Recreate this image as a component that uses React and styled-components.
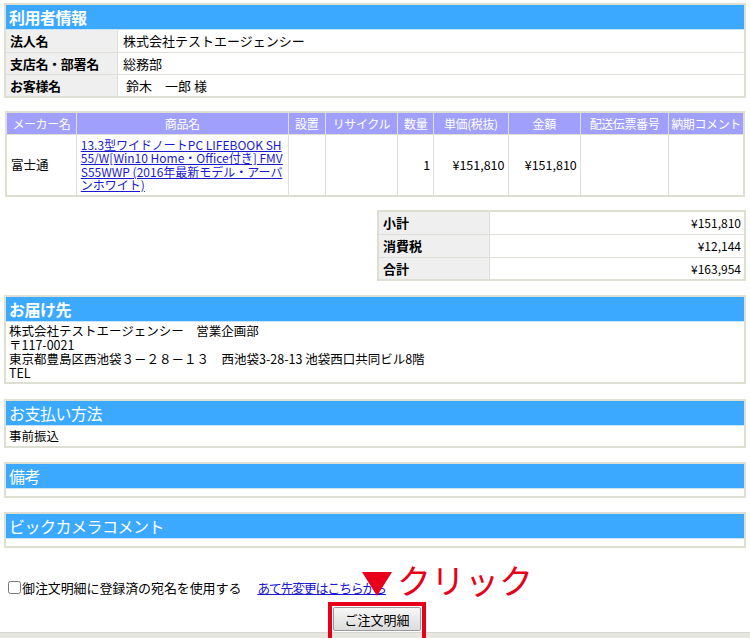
import React from 'react';
import styled, { createGlobalStyle } from 'styled-components';

const Global = createGlobalStyle`
  html, body { margin: 0; padding: 0; background: #fff; }
  body { font-family: "Noto Sans CJK JP", "Noto Sans", sans-serif; color: #000; font-size: 12px; }
  * { box-sizing: border-box; }
`;

const Page = styled.div`
  position: relative;
  width: 750px;
  height: 638px;
  overflow: hidden;
  padding: 3px 4px 0 4px;
  display: flex;
  flex-direction: column;
`;

const Section = styled.section`
  border: 2px solid #dcdfd2;
  margin-top: ${p => p.$mt || 0}px;
`;

const Header = styled.h2`
  margin: 0;
  height: 25px;
  background: #3aa9ff;
  border-bottom: 1px solid #c7e3f7;
  color: #fff;
  font-size: 16px;
  font-weight: ${p => (p.$bold ? 700 : 400)};
  line-height: 25px;
  padding-left: 3px;
  letter-spacing: -0.5px;
`;

const InfoRow = styled.div`
  display: grid;
  grid-template-columns: 112px 1fr;
  height: 22px;
  border-top: ${p => (p.$first ? 'none' : '1px solid #dedfd8')};
`;

const Label = styled.div`
  background: #efefef;
  border-right: 1px solid #dedfd8;
  font-weight: 700;
  font-size: 13px;
  line-height: 21px;
  padding-left: 4px;
  letter-spacing: -0.3px;
`;

const Value = styled.div`
  font-size: 13px;
  line-height: 21px;
  padding-left: ${p => p.$pad || 5}px;
  background: #fff;
`;

const Table = styled.table`
  border-collapse: collapse;
  table-layout: fixed;
  border: 2px solid #dcdfd2;
  width: ${p => p.$w}px;
  margin-top: ${p => p.$mt}px;
  margin-left: ${p => (p.$right ? 'auto' : '1px')};
`;

const Th = styled.th`
  background: #a0a0fc;
  color: #fff;
  font-weight: 400;
  font-size: 12px;
  height: 22px;
  padding: 0 1px;
  border: 1px solid #dcdfd2;
  white-space: nowrap;
  overflow: hidden;
  text-align: center;
  letter-spacing: -0.4px;
`;

const Td = styled.td`
  border: 1px solid #dedfd8;
  font-size: 12.5px;
  padding: 2px 3px 2px 4px;
  text-align: ${p => p.$align || 'left'};
  vertical-align: middle;
  height: 62px;
`;

const ProductLink = styled.a`
  color: #1a1ad0;
  text-decoration: underline;
  font-size: 12px;
  line-height: 13.5px;
  display: block;
  letter-spacing: 0px;
  word-break: break-all;
`;

const SumLabel = styled.td`
  background: #efefef;
  border: 1px solid #dedfd8;
  font-weight: 700;
  font-size: 13px;
  height: 23px;
  padding: 0 4px;
  width: 111px;
`;

const SumValue = styled.td`
  border: 1px solid #dedfd8;
  font-size: 12px;
  text-align: right;
  padding: 0 3px;
`;

const Body = styled.div`
  padding: ${p => p.$py}px 3px;
  font-size: 12.5px;
  line-height: 14px;
`;

const EmptyBody = styled.div`
  height: 7px;
`;

const CheckRow = styled.div`
  margin-top: 31px;
  display: flex;
  align-items: center;
  font-size: 13px;
  letter-spacing: -0.1px;
  height: 16px;
  padding-left: 4px;
`;

const Check = styled.input`
  margin: 0 1px 0 0;
  width: 13px;
  height: 13px;
`;

const ChangeLink = styled.a`
  color: #1a1ad0;
  text-decoration: underline;
  margin-left: 16px;
  letter-spacing: -1.3px;
`;

const ButtonArea = styled.div`
  display: flex;
  justify-content: center;
  padding-left: 4px;
  margin-top: 7px;
`;

const Highlight = styled.div`
  border: 4px solid #e8001a;
  padding: 1px;
  height: 45px;
`;

const OrderButton = styled.button`
  width: 88px;
  height: 24px;
  font-family: inherit;
  font-size: 13px;
  background: linear-gradient(#f7f7f7, #dcdcdc);
  border: 1px solid #9a9a9a;
  border-radius: 2px;
  padding: 0;
  color: #000;
`;

const Footer = styled.div`
  position: absolute;
  left: 0;
  right: 0;
  top: 632px;
  height: 6px;
  background: #e6e6e0;
  border-top: 1px solid #d8d8d0;
  z-index: 0;
`;

const Triangle = styled.div`
  position: absolute;
  left: 362px;
  top: 572px;
  width: 0;
  height: 0;
  border-left: 15px solid transparent;
  border-right: 15px solid transparent;
  border-top: 24px solid #e8001a;
  z-index: 2;
`;

const ClickText = styled.div`
  position: absolute;
  left: 397px;
  top: 558px;
  color: #e8001a;
  font-size: 34px;
  line-height: 44px;
  z-index: 2;
`;

const AboveFooter = styled.div`
  position: relative;
  z-index: 1;
`;

const cols = [70, 211, 37, 72, 36, 74, 72, 88, 75];
const heads = ['メーカー名', '商品名', '設置', 'リサイクル', '数量', '単価(税抜)', '金額', '配送伝票番号', '納期コメント'];

export default function App() {
  return (
    <>
      <Global />
      <Page>
        <Section>
          <Header $bold>利用者情報</Header>
          <InfoRow $first>
            <Label>法人名</Label>
            <Value>株式会社テストエージェンシー</Value>
          </InfoRow>
          <InfoRow>
            <Label>支店名・部署名</Label>
            <Value>総務部</Value>
          </InfoRow>
          <InfoRow>
            <Label>お客様名</Label>
            <Value $pad={8}>鈴木　一郎 様</Value>
          </InfoRow>
        </Section>

        <Table $w={740} $mt={13}>
          <colgroup>
            {cols.map((w, i) => <col key={i} style={{ width: w }} />)}
          </colgroup>
          <thead>
            <tr>{heads.map(h => <Th key={h}>{h}</Th>)}</tr>
          </thead>
          <tbody>
            <tr>
              <Td>富士通</Td>
              <Td>
                <ProductLink href="#">13.3型ワイドノートPC LIFEBOOK SH55/W[Win10 Home・Office付き] FMVS55WWP (2016年最新モデル・アーバンホワイト)</ProductLink>
              </Td>
              <Td />
              <Td />
              <Td $align="right">1</Td>
              <Td $align="right">¥151,810</Td>
              <Td $align="right">¥151,810</Td>
              <Td />
              <Td />
            </tr>
          </tbody>
        </Table>

        <Table $w={369} $mt={13} $right>
          <tbody>
            <tr><SumLabel>小計</SumLabel><SumValue>¥151,810</SumValue></tr>
            <tr><SumLabel>消費税</SumLabel><SumValue>¥12,144</SumValue></tr>
            <tr><SumLabel>合計</SumLabel><SumValue>¥163,954</SumValue></tr>
          </tbody>
        </Table>

        <Section $mt={14}>
          <Header $bold>お届け先</Header>
          <Body $py={2}>
            株式会社テストエージェンシー　営業企画部<br />
            〒117-0021<br />
            東京都豊島区西池袋３－２８－１３　西池袋3-28-13 池袋西口共同ビル8階<br />
            TEL
          </Body>
        </Section>

        <Section $mt={15}>
          <Header>お支払い方法</Header>
          <Body $py={3}>事前振込</Body>
        </Section>

        <Section $mt={14}>
          <Header>備考</Header>
          <EmptyBody />
        </Section>

        <Section $mt={14}>
          <Header>ビックカメラコメント</Header>
          <EmptyBody />
        </Section>

        <AboveFooter>
          <CheckRow>
            <Check type="checkbox" />
            <span>御注文明細に登録済の宛名を使用する</span>
            <ChangeLink href="#">あて先変更はこちらから</ChangeLink>
          </CheckRow>
          <ButtonArea>
            <Highlight>
              <OrderButton>ご注文明細</OrderButton>
            </Highlight>
          </ButtonArea>
        </AboveFooter>

        <Footer />
        <Triangle />
        <ClickText>クリック</ClickText>
      </Page>
    </>
  );
}
